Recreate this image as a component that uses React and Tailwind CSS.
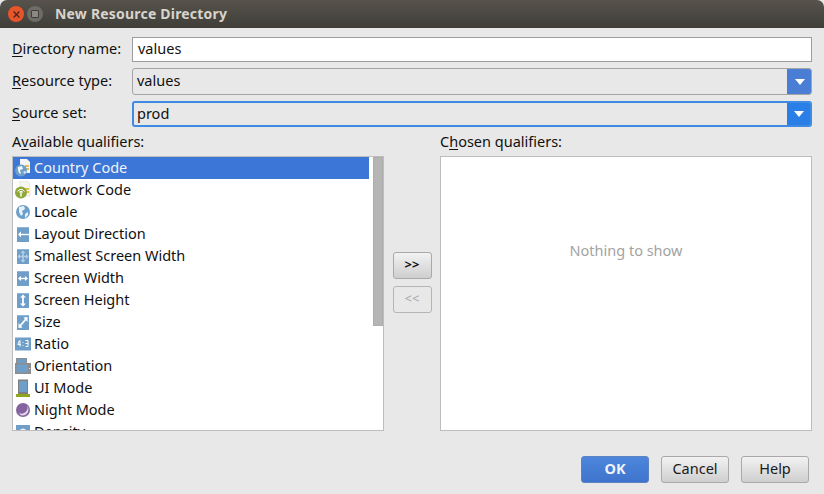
import React from 'react';

const Blue = '#6f9fc8';

function Tile({ children }) {
  return (
    <svg width="16" height="16" viewBox="0 0 16 16" fill="none">
      <rect x="2" y="1" width="12" height="15" fill={Blue} />
      <rect x="2" y="1" width="12" height="1" fill="#8fb6d8" />
      {children}
    </svg>
  );
}

const ICONS = {
  country: (
    <svg width="18" height="18" viewBox="0 0 18 18">
      <path d="M6 0h7l3 3v11H6z" fill="#f5f5f5" />
      <rect x="11" y="6" width="4" height="2" fill="#e5c04a" />
      <rect x="11" y="9" width="4" height="2" fill="#e5c04a" />
      <circle cx="7" cy="11.5" r="6" fill="#6d9fcb" />
      <path d="M4 8l4-1 1 3-3 1 1 4-2-1-1-3zM9 13l3-1-1 3z" fill="#f2f6fa" />
    </svg>
  ),
  network: (
    <svg width="18" height="18" viewBox="0 0 18 18">
      <path d="M6 0h7l3 3v12H6z" fill="#f6f6f0" stroke="#dcdcd4" strokeWidth="0.6" />
      <rect x="11" y="7" width="4" height="2" fill="#e5c04a" />
      <rect x="11" y="10" width="4" height="2" fill="#e5c04a" />
      <circle cx="7" cy="11.5" r="6" fill="#8fa83a" />
      <path d="M3.5 10.5a4 4 0 0 1 7 0M5 11.5a2.4 2.4 0 0 1 4 0" stroke="#fff" strokeWidth="1" fill="none" />
      <path d="M7 10.5v5" stroke="#fff" strokeWidth="1.4" />
    </svg>
  ),
  locale: (
    <svg width="16" height="16" viewBox="0 0 16 16">
      <circle cx="8" cy="8" r="7" fill="#6d9fcb" />
      <path d="M4 3l5-1 1 3-3 2 1 3-2 2-2-4zM10 10l3-2 0 3-3 3z" fill="#eaf1f7" />
    </svg>
  ),
  layout: (
    <Tile>
      <path d="M5 8.5h9" stroke="#fff" strokeWidth="1.4" />
      <path d="M3 8.5l3-3v6z" fill="#fff" />
    </Tile>
  ),
  smallest: (
    <Tile>
      <path d="M3.5 8.5h9M8 3.5v10" stroke="#b4cfe5" strokeWidth="1.6" />
      <path d="M2.5 8.5l2.5-2.5v5zM13.5 8.5l-2.5-2.5v5zM8 2.5l-2.5 2.5h5zM8 14.5l-2.5-2.5h5z" fill="#b4cfe5" />
    </Tile>
  ),
  width: (
    <Tile>
      <path d="M4 8.5h8" stroke="#fff" strokeWidth="1.4" />
      <path d="M3 8.5l3-2.5v5zM13 8.5l-3-2.5v5z" fill="#fff" />
    </Tile>
  ),
  height: (
    <Tile>
      <path d="M8 4v9" stroke="#fff" strokeWidth="1.8" />
      <path d="M8 2.5l-3 3h6zM8 14.5l-3-3h6z" fill="#fff" />
    </Tile>
  ),
  size: (
    <Tile>
      <path d="M5 12l6-7" stroke="#fff" strokeWidth="1.8" />
      <path d="M12.5 3v5l-4-4.5zM3.5 14v-5l4 4.5z" fill="#fff" />
    </Tile>
  ),
  ratio: (
    <svg width="16" height="14" viewBox="0 0 16 14">
      <rect width="16" height="13" y="0.5" fill={Blue} />
      <path d="M4.5 3.5L2.8 7.5h3M5 3.5v6M8 5v.8M8 8v.8M10.5 3.5h2.5v6h-2.5M10.5 6.5h2.5" stroke="#fff" strokeWidth="1" fill="none" />
    </svg>
  ),
  orientation: (
    <svg width="16" height="16" viewBox="0 0 16 16">
      <rect x="1.5" y="0.5" width="10" height="6" fill={Blue} stroke="#8d8d8d" />
      <rect y="5" width="16" height="11" fill="#8d8d8d" />
      <rect x="1.5" y="6.5" width="11.5" height="8" fill={Blue} />
      <rect x="14" y="10" width="1" height="1" fill="#e8e8e8" />
    </svg>
  ),
  ui: (
    <svg width="16" height="18" viewBox="0 0 16 18">
      <rect x="3" y="0.5" width="10" height="14.5" fill="#7d7f80" />
      <rect x="4" y="2" width="8" height="11" fill={Blue} />
      <rect x="1" y="15" width="14" height="3" fill="#8fa520" />
    </svg>
  ),
  night: (
    <svg width="16" height="16" viewBox="0 0 16 16">
      <circle cx="8" cy="8" r="7" fill="#84649f" />
      <path d="M4 11a6 6 0 0 0 8-8 6 6 0 0 1 1.5 5A6 6 0 0 1 5.5 13z" fill="#e6dcec" />
    </svg>
  ),
  density: (
    <svg width="16" height="16" viewBox="0 0 16 16">
      <rect x="1" y="1" width="14" height="15" fill={Blue} />
      <circle cx="8" cy="8" r="3.5" fill="#eee" />
    </svg>
  ),
};

const QUALIFIERS = [
  ['Country Code', 'country'],
  ['Network Code', 'network'],
  ['Locale', 'locale'],
  ['Layout Direction', 'layout'],
  ['Smallest Screen Width', 'smallest'],
  ['Screen Width', 'width'],
  ['Screen Height', 'height'],
  ['Size', 'size'],
  ['Ratio', 'ratio'],
  ['Orientation', 'orientation'],
  ['UI Mode', 'ui'],
  ['Night Mode', 'night'],
  ['Density', 'density'],
];

function Mnemonic({ before = '', char, after }) {
  return (
    <span>
      {before}
      <span className="underline underline-offset-2">{char}</span>
      {after}
    </span>
  );
}

function Arrow() {
  return (
    <svg width="10" height="6" viewBox="0 0 10 6">
      <path d="M0 0h10L5 6z" fill="#fff" />
    </svg>
  );
}

const btn =
  'h-[27px] w-[68px] pb-[2px] rounded-[3px] border border-[#a9a9a9] bg-gradient-to-b from-[#f2f2f2] to-[#cfcfcf] text-[#1a1a1a] flex items-center justify-center';

export default function App() {
  return (
    <div
      className="w-[824px] h-[494px] overflow-hidden bg-[#e8e8e8] text-[14.5px] text-[#111] flex flex-col"
      style={{ fontFamily: '"Noto Sans", sans-serif' }}
    >
      {/* title bar */}
      <div className="h-[28px] shrink-0 rounded-t-[7px] bg-gradient-to-b from-[#57534c] to-[#3f3e39] flex items-center pl-[8px]">
        <span className="w-[16px] h-[16px] rounded-full bg-[#e9552a] flex items-center justify-center">
          <svg width="7" height="7" viewBox="0 0 6 6">
            <path d="M0.5 0.5l5 5M5.5 0.5l-5 5" stroke="#4a2a20" strokeWidth="1.2" />
          </svg>
        </span>
        <span className="ml-[3px] w-[16px] h-[16px] rounded-full bg-[#6e6c66] flex items-center justify-center">
          <span className="w-[8px] h-[8px] rounded-[1px] border border-[#3e3d39] bg-[#8a8881]" />
        </span>
        <span className="ml-[12px] pb-[1px] text-[14px] font-bold tracking-[0.2px] text-[#d8d4cc]">New Resource Directory</span>
      </div>

      <div className="flex-1 flex flex-col pl-[12px] pr-[12px] pt-[9px]">
        {/* form rows */}
        <div className="flex items-center h-[25px]">
          <label className="w-[120px] shrink-0 pb-[2px]"><Mnemonic char="D" after="irectory name:" /></label>
          <div className="flex-1 h-[25px] pb-[2px] bg-white border border-[#9c9c9c] pl-[5px] flex items-center">values</div>
        </div>
        <div className="flex items-center h-[27px] mt-[6px]">
          <label className="w-[120px] shrink-0 pb-[2px]"><Mnemonic char="R" after="esource type:" /></label>
          <div className="flex-1 h-[27px] rounded-[3px] border border-[#a5a5a5] bg-[#e8e8e8] pl-[4px] flex items-center justify-between overflow-hidden">
            <span className="pb-[2px]">values</span>
            <span className="w-[25px] h-[27px] -mr-px bg-[#4a7dd4] flex items-center justify-center"><Arrow /></span>
          </div>
        </div>
        <div className="flex items-center h-[26px] mt-[6px]">
          <label className="w-[120px] shrink-0 pb-[2px]"><Mnemonic char="S" after="ource set:" /></label>
          <div className="flex-1 h-[26px] rounded-[3px] border-2 border-[#3f8ae2] bg-[#e8e8e8] pl-[3px] flex items-center justify-between overflow-hidden">
            <span className="leading-none pb-[2px]">prod</span>
            <span className="w-[24px] h-[26px] -mr-px bg-[#2a7fe6] flex items-center justify-center"><Arrow /></span>
          </div>
        </div>

        {/* qualifier panes */}
        <div className="flex mt-[5px]">
          <div className="w-[372px] shrink-0">
            <div className="h-[24px] pb-[4px] flex items-center"><Mnemonic before="A" char="v" after="ailable qualifiers:" /></div>
            <div className="h-[275px] border border-[#bdbdbd] bg-white flex overflow-hidden">
              <ul className="w-[356px] shrink-0">
                {QUALIFIERS.map(([name, icon], i) => (
                  <li
                    key={name}
                    className={`h-[22px] flex items-center ${i === 0 ? 'bg-[#3c76d6] text-[#f0f4fa]' : ''}`}
                  >
                    <span className="w-[21px] h-[22px] pr-px shrink-0 flex items-center justify-center">{ICONS[icon]}</span>
                    <span>{name}</span>
                  </li>
                ))}
              </ul>
              <div className="ml-[4px] w-[10px] h-[169px] bg-[#b5b5b5] border border-[#adadad]" />
            </div>
          </div>

          <div className="w-[56px] shrink-0 flex flex-col items-center pt-[120px] gap-[7px]">
            <button className="h-[27px] w-[39px] pb-[2px] rounded-[3px] border border-[#a9a9a9] bg-gradient-to-b from-[#f2f2f2] to-[#cfcfcf] font-bold text-[13px] text-[#111] flex items-center justify-center">&gt;&gt;</button>
            <button className="h-[27px] w-[39px] pb-[2px] rounded-[3px] border border-[#b5b5b5] bg-[#e8e8e8] text-[13px] text-[#a5a5a5] flex items-center justify-center">&lt;&lt;</button>
          </div>

          <div className="flex-1">
            <div className="h-[24px] pb-[4px] flex items-center"><Mnemonic before="C" char="h" after="osen qualifiers:" /></div>
            <div className="h-[275px] border border-[#bdbdbd] bg-white flex items-center justify-center text-[#a3a3a3] pb-[85px]">
              Nothing to show
            </div>
          </div>
        </div>

        {/* footer */}
        <div className="flex justify-end gap-[12px] mt-[25px] pr-[3px]">
          <button className="h-[27px] w-[68px] pb-[2px] rounded-[3px] border border-[#5b83c4] bg-gradient-to-b from-[#4d86dc] to-[#3f74cc] font-bold text-[#eef3fb] flex items-center justify-center">OK</button>
          <button className={btn}>Cancel</button>
          <button className={btn}>Help</button>
        </div>
      </div>
    </div>
  );
}
